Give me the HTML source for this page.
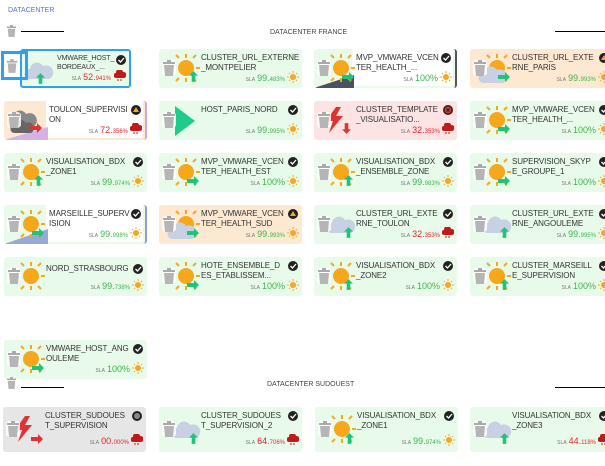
<!DOCTYPE html><html><head><meta charset="utf-8"><style>
*{margin:0;padding:0;box-sizing:border-box}
body{width:605px;height:466px;background:#fff;font-family:"Liberation Sans",sans-serif;position:relative;overflow:hidden}
.a{position:absolute}
.card{position:absolute;width:143px;height:39px;border-radius:3px;background:#e8fbea;overflow:hidden}
.g{background:#e8fbea}.o{background:#fde9d2}.r{background:#fde4e4}.k{background:#e6e6e6}
.nm{position:absolute;left:42px;top:4px;font-size:8px;line-height:10px;color:#333;white-space:nowrap;letter-spacing:-0.1px}
.st{position:absolute;right:4px;top:4px;width:10px;height:10px}
.sla{position:absolute;right:17px;top:24px;font-size:9px;color:#3ab54a;white-space:nowrap}
.sla i{font-style:normal;font-size:5px;color:#777;margin-right:2px}
.sla b{font-weight:normal;font-size:6px}
.red{color:#e8242b}
.wx{position:absolute;right:3px;top:22px;width:12px;height:12px}
.ic{position:absolute;left:12px;top:4px;width:30px;height:30px}
.tr{position:absolute;left:3px;top:11px;width:14px;height:16px}
.white{position:absolute;left:38px;top:0;right:2px;bottom:2px;background:#fff;border-radius:0 2px 2px 0}
</style></head><body>
<svg width="0" height="0" style="position:absolute"><defs>
<symbol id="sun" viewBox="0 0 30 30"><g stroke="#f6a71c" stroke-width="2"><line x1="15" y1="1" x2="15" y2="5"/><line x1="15" y1="25" x2="15" y2="29"/><line x1="25" y1="15" x2="29" y2="15"/><line x1="22" y1="5" x2="25" y2="2"/><line x1="22" y1="25" x2="25" y2="28"/><line x1="8" y1="5" x2="5" y2="2"/><line x1="8" y1="25" x2="5" y2="28"/></g><circle cx="15" cy="15" r="8" fill="#f6a71c"/></symbol>
<symbol id="cloud" viewBox="0 0 30 30"><path d="M5 24a5 5 0 0 1 1-10a7 7 0 0 1 13-3a6 6 0 0 1 6 13z" fill="#c8d0e3"/></symbol>
<symbol id="dcloud" viewBox="0 0 30 30"><path d="M4 22a5 5 0 0 1 1-10a7 7 0 0 1 13-3a6 6 0 0 1 7 13z" fill="#888"/><path d="M6 28a4 4 0 0 1 1-8a6 6 0 0 1 11-2a5 5 0 0 1 5 10z" fill="#666"/></symbol>
<symbol id="bolt" viewBox="0 0 30 30"><path d="M14 2L4 16h7l-4 12 14-17h-7l5-9z" fill="#d33"/></symbol>
<symbol id="up" viewBox="0 0 10 12"><path d="M5 0L10 5H7v7H3V5H0z" fill="#1ec47a"/></symbol>
<symbol id="rt" viewBox="0 0 12 10"><path d="M12 5L7 0v3H0v4h7v3z" fill="#1ec47a"/></symbol>
<symbol id="rtr" viewBox="0 0 12 10"><path d="M12 5L7 0v3H0v4h7v3z" fill="#d33"/></symbol>
<symbol id="dnr" viewBox="0 0 10 12"><path d="M5 12L10 7H7V0H3v7H0z" fill="#d33"/></symbol>
<symbol id="chk" viewBox="0 0 10 10"><circle cx="5" cy="5" r="5" fill="#222"/><path d="M2.5 5l2 2 3.5-4" stroke="#fff" stroke-width="1.3" fill="none"/></symbol>
<symbol id="wrn" viewBox="0 0 10 10"><circle cx="5" cy="5" r="5" fill="#222"/><path d="M5 2l3 5H2z" fill="#f6a71c"/></symbol>
<symbol id="xx" viewBox="0 0 10 10"><circle cx="5" cy="5" r="5" fill="#222"/><circle cx="5" cy="5" r="3.5" fill="#d33"/><path d="M3.5 3.5l3 3M6.5 3.5l-3 3" stroke="#222" stroke-width="1"/></symbol>
<symbol id="unk" viewBox="0 0 10 10"><circle cx="5" cy="5" r="5" fill="#222"/><circle cx="5" cy="5" r="3" fill="#888"/></symbol>
<symbol id="rain" viewBox="0 0 12 12"><path d="M2 8a2.5 2.5 0 0 1 0-5a3.5 3.5 0 0 1 7-1a3 3 0 0 1 1 6z" fill="#c01a1a"/><path d="M4 9v2M7 9v2" stroke="#c01a1a"/></symbol>
<symbol id="ssun" viewBox="0 0 12 12"><circle cx="6" cy="6" r="3" fill="#f6a71c"/><g stroke="#f6a71c"><line x1="6" y1="0" x2="6" y2="2"/><line x1="6" y1="10" x2="6" y2="12"/><line x1="0" y1="6" x2="2" y2="6"/><line x1="10" y1="6" x2="12" y2="6"/><line x1="2" y1="2" x2="3" y2="3"/><line x1="10" y1="2" x2="9" y2="3"/><line x1="2" y1="10" x2="3" y2="9"/><line x1="10" y1="10" x2="9" y2="9"/></g></symbol>
<symbol id="trash" viewBox="0 0 14 16"><circle cx="7" cy="8" r="9" fill="#fff" opacity=".85"/><rect x="1" y="2" width="12" height="2" fill="#aaa"/><rect x="5" y="0" width="4" height="2" fill="#aaa"/><path d="M2 5h10l-1 11H3z" fill="#b5b5b5"/></symbol>
</defs></svg>

<div class="a" style="left:8px;top:7px;font-size:7px;color:#5b6fd6">DATACENTER</div>
<svg class="a" style="left:6px;top:25px" width="11" height="12"><use href="#trash"/></svg>
<div class="a" style="left:21px;top:31px;width:43px;height:1px;background:#000"></div>
<div class="a" style="left:270px;top:29px;font-size:7px;color:#444">DATACENTER FRANCE</div>
<div class="a" style="left:555px;top:31px;width:50px;height:1px;background:#000"></div>

<!-- row1 -->
<div class="card g" style="left:20px;top:49px;width:111px;border:2px solid #2fa0ec;border-radius:3px"><svg class="ic" style="left:2px" viewBox="0 0 30 30"><use href="#cloud"/></svg><svg class="a" style="left:14px;top:22px" width="9" height="11"><use href="#up"/></svg><div class="nm" style="left:35px;font-size:7px;line-height:9px;top:3px">VMWARE_HOST_<br>BORDEAUX_...</div><svg class="st" style="right:3px"><use href="#chk"/></svg><div class="sla red" style="right:18px;top:21px"><i>SLA</i>52.<b>941%</b></div><svg class="wx" style="top:19px"><use href="#rain"/></svg></div>
<div class="a" style="left:1px;top:51px;width:27px;height:29px;border:3px solid #2fa0ec"></div>
<svg class="a" style="left:6px;top:59px" width="12" height="14"><use href="#trash"/></svg>

<div class="card g" style="left:159px;top:49px"><svg class="ic"><use href="#sun"/></svg><svg class="a" style="left:30px;top:22px" width="9" height="11"><use href="#up"/></svg><svg class="tr"><use href="#trash"/></svg><div class="nm">CLUSTER_URL_EXTERNE<br>_MONTPELIER</div><div class="sla"><i>SLA</i>99.<b>483%</b></div><svg class="wx"><use href="#ssun"/></svg></div>
<div class="card g" style="left:314px;top:49px;border-right:2px solid #555"><div class="white"></div><svg class="a" style="left:0;top:0" width="143" height="39"><path d="M0 39L40 26V39z" fill="#4a5160"/></svg><svg class="ic"><use href="#sun"/></svg><svg class="a" style="left:28px;top:23px" width="12" height="10"><use href="#rt"/></svg><svg class="tr"><use href="#trash"/></svg><div class="nm">MVP_VMWARE_VCEN<br>TER_HEALTH_...</div><svg class="st"><use href="#chk"/></svg><div class="sla"><i>SLA</i>100%</div><svg class="wx"><use href="#ssun"/></svg></div>
<div class="card o" style="left:470px;top:49px"><svg class="ic"><use href="#sun"/></svg><svg class="ic" style="top:10px;left:8px"><use href="#cloud"/></svg><svg class="a" style="left:28px;top:23px" width="12" height="10"><use href="#rt"/></svg><svg class="tr"><use href="#trash"/></svg><div class="nm">CLUSTER_URL_EXTE<br>RNE_PARIS</div><svg class="st"><use href="#wrn"/></svg><div class="sla"><i>SLA</i>99.<b>993%</b></div><svg class="wx"><use href="#ssun"/></svg></div>

<!-- row2 -->
<div class="card o" style="left:4px;top:101px;border-right:2px solid #c9a6e0"><div class="white" style="left:42px"></div><svg class="a" width="143" height="39"><path d="M0 39L44 26V39z" fill="#d6b1e6"/></svg><svg class="ic" style="left:4px"><use href="#dcloud"/></svg><svg class="a" style="left:26px;top:22px" width="12" height="10"><use href="#rtr"/></svg><svg class="tr"><use href="#trash"/></svg><div class="nm" style="left:45px">TOULON_SUPERVISI<br>ON</div><svg class="st"><use href="#wrn"/></svg><div class="sla red"><i>SLA</i>72.<b>356%</b></div><svg class="wx"><use href="#rain"/></svg></div>
<div class="card g" style="left:159px;top:101px"><svg class="a" style="left:16px;top:5px" width="20" height="30" viewBox="0 0 20 30"><path d="M0 0L20 15L0 30z" fill="#1ecb8a"/></svg><svg class="tr"><use href="#trash"/></svg><div class="nm">HOST_PARIS_NORD</div><svg class="st"><use href="#chk"/></svg><div class="sla"><i>SLA</i>99.<b>995%</b></div><svg class="wx"><use href="#ssun"/></svg></div>
<div class="card r" style="left:314px;top:101px"><svg class="ic" style="left:8px"><use href="#bolt"/></svg><svg class="a" style="left:28px;top:22px" width="9" height="11"><use href="#dnr"/></svg><svg class="tr"><use href="#trash"/></svg><div class="nm">CLUSTER_TEMPLATE<br>_VISUALISATIO...</div><svg class="st"><use href="#xx"/></svg><div class="sla red"><i>SLA</i>32.<b>353%</b></div><svg class="wx"><use href="#rain"/></svg></div>
<div class="card g" style="left:470px;top:101px"><svg class="ic"><use href="#sun"/></svg><svg class="a" style="left:28px;top:23px" width="12" height="10"><use href="#rt"/></svg><svg class="tr"><use href="#trash"/></svg><div class="nm">MVP_VMWARE_VCEN<br>TER_HEALTH_...</div><svg class="st"><use href="#chk"/></svg><div class="sla"><i>SLA</i>100%</div><svg class="wx"><use href="#ssun"/></svg></div>

<!-- row3 -->
<div class="card g" style="left:4px;top:153px"><svg class="ic"><use href="#sun"/></svg><svg class="a" style="left:30px;top:22px" width="9" height="11"><use href="#up"/></svg><svg class="tr"><use href="#trash"/></svg><div class="nm">VISUALISATION_BDX<br>_ZONE1</div><svg class="st"><use href="#chk"/></svg><div class="sla"><i>SLA</i>99.<b>974%</b></div><svg class="wx"><use href="#ssun"/></svg></div>
<div class="card g" style="left:159px;top:153px"><svg class="ic"><use href="#sun"/></svg><svg class="a" style="left:28px;top:23px" width="12" height="10"><use href="#rt"/></svg><svg class="tr"><use href="#trash"/></svg><div class="nm">MVP_VMWARE_VCEN<br>TER_HEALTH_EST</div><svg class="st"><use href="#chk"/></svg><div class="sla"><i>SLA</i>100%</div><svg class="wx"><use href="#ssun"/></svg></div>
<div class="card g" style="left:314px;top:153px"><svg class="ic"><use href="#sun"/></svg><svg class="a" style="left:30px;top:22px" width="9" height="11"><use href="#up"/></svg><svg class="tr"><use href="#trash"/></svg><div class="nm">VISUALISATION_BDX<br>_ENSEMBLE_ZONE</div><svg class="st"><use href="#chk"/></svg><div class="sla"><i>SLA</i>99.<b>983%</b></div><svg class="wx"><use href="#ssun"/></svg></div>
<div class="card g" style="left:470px;top:153px"><svg class="ic"><use href="#sun"/></svg><svg class="a" style="left:28px;top:23px" width="12" height="10"><use href="#rt"/></svg><svg class="tr"><use href="#trash"/></svg><div class="nm">SUPERVISION_SKYP<br>E_GROUPE_1</div><svg class="st"><use href="#chk"/></svg><div class="sla"><i>SLA</i>100%</div><svg class="wx"><use href="#ssun"/></svg></div>

<!-- row4 -->
<div class="card g" style="left:4px;top:205px;border-right:2px solid #8e9fcf"><div class="white" style="left:42px"></div><svg class="a" width="143" height="39"><path d="M0 39L44 24V39z" fill="#9aa8d6"/></svg><svg class="ic"><use href="#sun"/></svg><svg class="a" style="left:28px;top:23px" width="12" height="10"><use href="#rt"/></svg><svg class="tr"><use href="#trash"/></svg><div class="nm" style="left:45px">MARSEILLE_SUPERV<br>ISION</div><svg class="st"><use href="#chk"/></svg><div class="sla"><i>SLA</i>99.<b>998%</b></div><svg class="wx"><use href="#ssun"/></svg></div>
<div class="card o" style="left:159px;top:205px"><svg class="ic"><use href="#sun"/></svg><svg class="ic" style="top:10px;left:8px"><use href="#cloud"/></svg><svg class="a" style="left:28px;top:23px" width="12" height="10"><use href="#rt"/></svg><svg class="tr"><use href="#trash"/></svg><div class="nm">MVP_VMWARE_VCEN<br>TER_HEALTH_SUD</div><svg class="st"><use href="#wrn"/></svg><div class="sla"><i>SLA</i>99.<b>993%</b></div><svg class="wx"><use href="#ssun"/></svg></div>
<div class="card g" style="left:314px;top:205px"><svg class="ic"><use href="#cloud"/></svg><svg class="a" style="left:30px;top:22px" width="9" height="11"><use href="#up"/></svg><svg class="tr"><use href="#trash"/></svg><div class="nm">CLUSTER_URL_EXTE<br>RNE_TOULON</div><svg class="st"><use href="#chk"/></svg><div class="sla red"><i>SLA</i>32.<b>353%</b></div><svg class="wx"><use href="#rain"/></svg></div>
<div class="card g" style="left:470px;top:205px"><svg class="ic"><use href="#cloud"/></svg><svg class="a" style="left:30px;top:22px" width="9" height="11"><use href="#up"/></svg><svg class="tr"><use href="#trash"/></svg><div class="nm">CLUSTER_URL_EXTE<br>RNE_ANGOULEME</div><svg class="st"><use href="#chk"/></svg><div class="sla"><i>SLA</i>99.<b>995%</b></div><svg class="wx"><use href="#ssun"/></svg></div>

<!-- row5 -->
<div class="card g" style="left:4px;top:257px"><svg class="ic"><use href="#sun"/></svg><svg class="tr"><use href="#trash"/></svg><div class="nm" style="top:7px">NORD_STRASBOURG</div><svg class="st" style="top:7px"><use href="#chk"/></svg><div class="sla"><i>SLA</i>99.<b>738%</b></div><svg class="wx"><use href="#ssun"/></svg></div>
<div class="card g" style="left:159px;top:257px"><svg class="ic"><use href="#sun"/></svg><svg class="a" style="left:28px;top:23px" width="12" height="10"><use href="#rt"/></svg><svg class="tr"><use href="#trash"/></svg><div class="nm">HOTE_ENSEMBLE_D<br>ES_ETABLISSEM...</div><svg class="st"><use href="#chk"/></svg><div class="sla"><i>SLA</i>100%</div><svg class="wx"><use href="#ssun"/></svg></div>
<div class="card g" style="left:314px;top:257px"><svg class="ic"><use href="#sun"/></svg><svg class="a" style="left:30px;top:22px" width="9" height="11"><use href="#up"/></svg><svg class="tr"><use href="#trash"/></svg><div class="nm">VISUALISATION_BDX<br>_ZONE2</div><svg class="st"><use href="#chk"/></svg><div class="sla"><i>SLA</i>100%</div><svg class="wx"><use href="#ssun"/></svg></div>
<div class="card g" style="left:470px;top:257px"><svg class="ic"><use href="#sun"/></svg><svg class="a" style="left:30px;top:22px" width="9" height="11"><use href="#up"/></svg><svg class="tr"><use href="#trash"/></svg><div class="nm">CLUSTER_MARSEILL<br>E_SUPERVISION</div><svg class="st"><use href="#chk"/></svg><div class="sla"><i>SLA</i>100%</div><svg class="wx"><use href="#ssun"/></svg></div>

<!-- row6 -->
<div class="card g" style="left:4px;top:340px"><svg class="ic"><use href="#sun"/></svg><svg class="a" style="left:28px;top:23px" width="12" height="10"><use href="#rt"/></svg><svg class="tr"><use href="#trash"/></svg><div class="nm">VMWARE_HOST_ANG<br>OULEME</div><svg class="st"><use href="#chk"/></svg><div class="sla"><i>SLA</i>100%</div><svg class="wx"><use href="#ssun"/></svg></div>

<svg class="a" style="left:6px;top:377px" width="11" height="12"><use href="#trash"/></svg>
<div class="a" style="left:21px;top:387px;width:43px;height:1px;background:#000"></div>
<div class="a" style="left:267px;top:381px;font-size:7px;color:#444">DATACENTER SUDOUEST</div>
<div class="a" style="left:555px;top:387px;width:50px;height:1px;background:#000"></div>

<!-- sudouest -->
<div class="card k" style="left:3px;top:407px;height:45px"><svg class="ic" style="left:8px;top:7px"><use href="#bolt"/></svg><svg class="a" style="left:28px;top:27px" width="12" height="10"><use href="#rtr"/></svg><svg class="tr" style="top:14px"><use href="#trash"/></svg><div class="nm">CLUSTER_SUDOUES<br>T_SUPERVISION</div><svg class="st"><use href="#unk"/></svg><div class="sla red" style="top:29px"><i>SLA</i>00.<b>000%</b></div><svg class="wx" style="top:27px"><use href="#rain"/></svg></div>
<div class="card g" style="left:159px;top:407px;height:45px"><svg class="ic" style="top:7px"><use href="#cloud"/></svg><svg class="a" style="left:30px;top:26px" width="9" height="11"><use href="#up"/></svg><svg class="tr" style="top:14px"><use href="#trash"/></svg><div class="nm">CLUSTER_SUDOUES<br>T_SUPERVISION_2</div><svg class="st"><use href="#chk"/></svg><div class="sla red" style="top:29px"><i>SLA</i>64.<b>706%</b></div><svg class="wx" style="top:27px"><use href="#rain"/></svg></div>
<div class="card g" style="left:315px;top:407px;height:45px"><svg class="ic" style="top:7px"><use href="#sun"/></svg><svg class="a" style="left:30px;top:26px" width="9" height="11"><use href="#up"/></svg><svg class="tr" style="top:14px"><use href="#trash"/></svg><div class="nm">VISUALISATION_BDX<br>_ZONE1</div><svg class="st"><use href="#chk"/></svg><div class="sla" style="top:29px"><i>SLA</i>99.<b>974%</b></div><svg class="wx" style="top:27px"><use href="#ssun"/></svg></div>
<div class="card g" style="left:470px;top:407px;height:45px"><svg class="ic" style="top:7px"><use href="#cloud"/></svg><svg class="a" style="left:30px;top:26px" width="9" height="11"><use href="#up"/></svg><svg class="tr" style="top:14px"><use href="#trash"/></svg><div class="nm">VISUALISATION_BDX<br>_ZONE3</div><svg class="st"><use href="#chk"/></svg><div class="sla red" style="top:29px"><i>SLA</i>44.<b>118%</b></div><svg class="wx" style="top:27px"><use href="#rain"/></svg></div>
</body></html>
